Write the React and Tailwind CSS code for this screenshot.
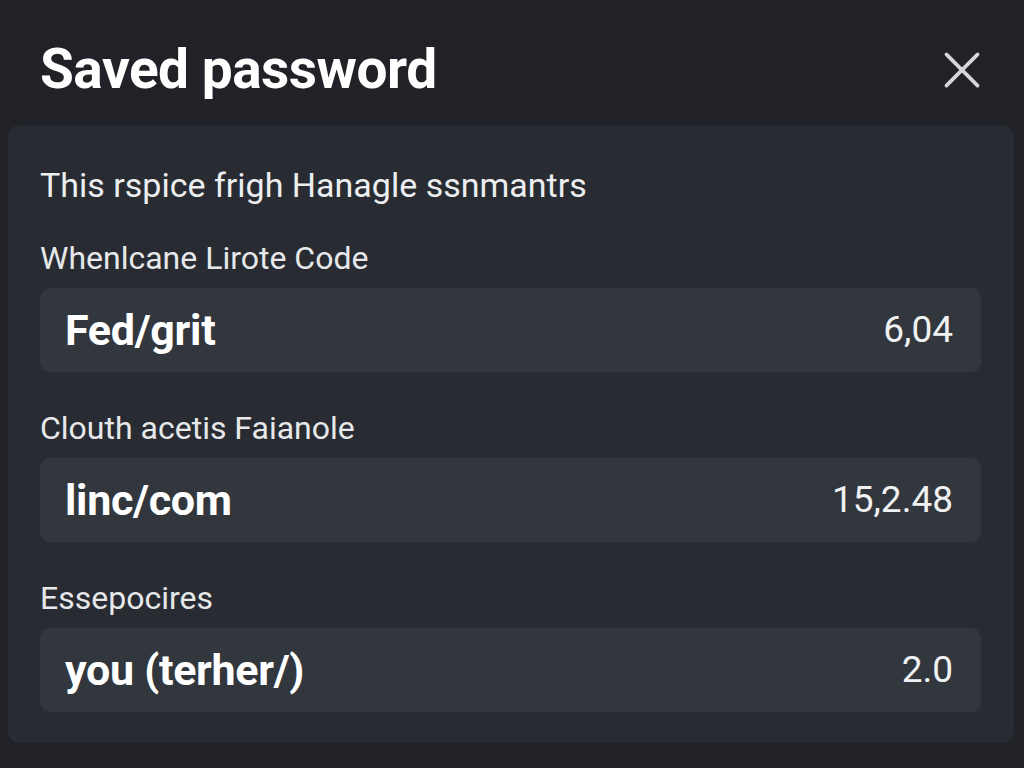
export default function App() {
  const rows = [
    { label: 'Whenlcane Lirote Code', name: 'Fed/grit', value: '6,04' },
    { label: 'Clouth acetis Faianole', name: 'linc/com', value: '15,2.48' },
    { label: 'Essepocires', name: 'you (terher/)', value: '2.0' },
  ];

  return (
    <div
      className="min-h-[768px] w-[1024px] bg-[#202227] text-white"
      style={{ fontFamily: 'Roboto, "Noto Sans", sans-serif' }}
    >
      <header className="flex h-[125px] items-center justify-between pl-10 pr-[40px] pt-[14px]">
        <h1 className="text-[55px] font-bold leading-none tracking-[-0.5px]">Saved password</h1>
        <button className="text-[#d4d6d9]">
          <svg width="44" height="44" viewBox="0 0 24 24" fill="none" stroke="currentColor" strokeWidth="2" strokeLinecap="round">
            <path d="M3.5 3.5l17 17M20.5 3.5l-17 17" />
          </svg>
        </button>
      </header>

      <section className="ml-2 mr-[10px] rounded-xl bg-[#282c32] pb-[31px] pl-8 pr-[33px] pt-[40px]">
        <p className="text-[34px] leading-[40px] text-[#eceef0]">This rspice frigh Hanagle ssnmantrs</p>

        <div className="mt-[35px] space-y-[38px]">
          {rows.map((r) => (
            <div key={r.name}>
              <p className="text-[32px] leading-[36px] text-[#e6e8ea]">{r.label}</p>
              <div className="mt-[12px] flex h-[84px] items-center justify-between rounded-[10px] bg-[#32373e] pl-[25px] pr-[28px]">
                <span className="text-[43px] font-bold tracking-[-0.3px]">{r.name}</span>
                <span className="text-[37px] text-[#f0f1f2]">{r.value}</span>
              </div>
            </div>
          ))}
        </div>
      </section>
    </div>
  );
}
